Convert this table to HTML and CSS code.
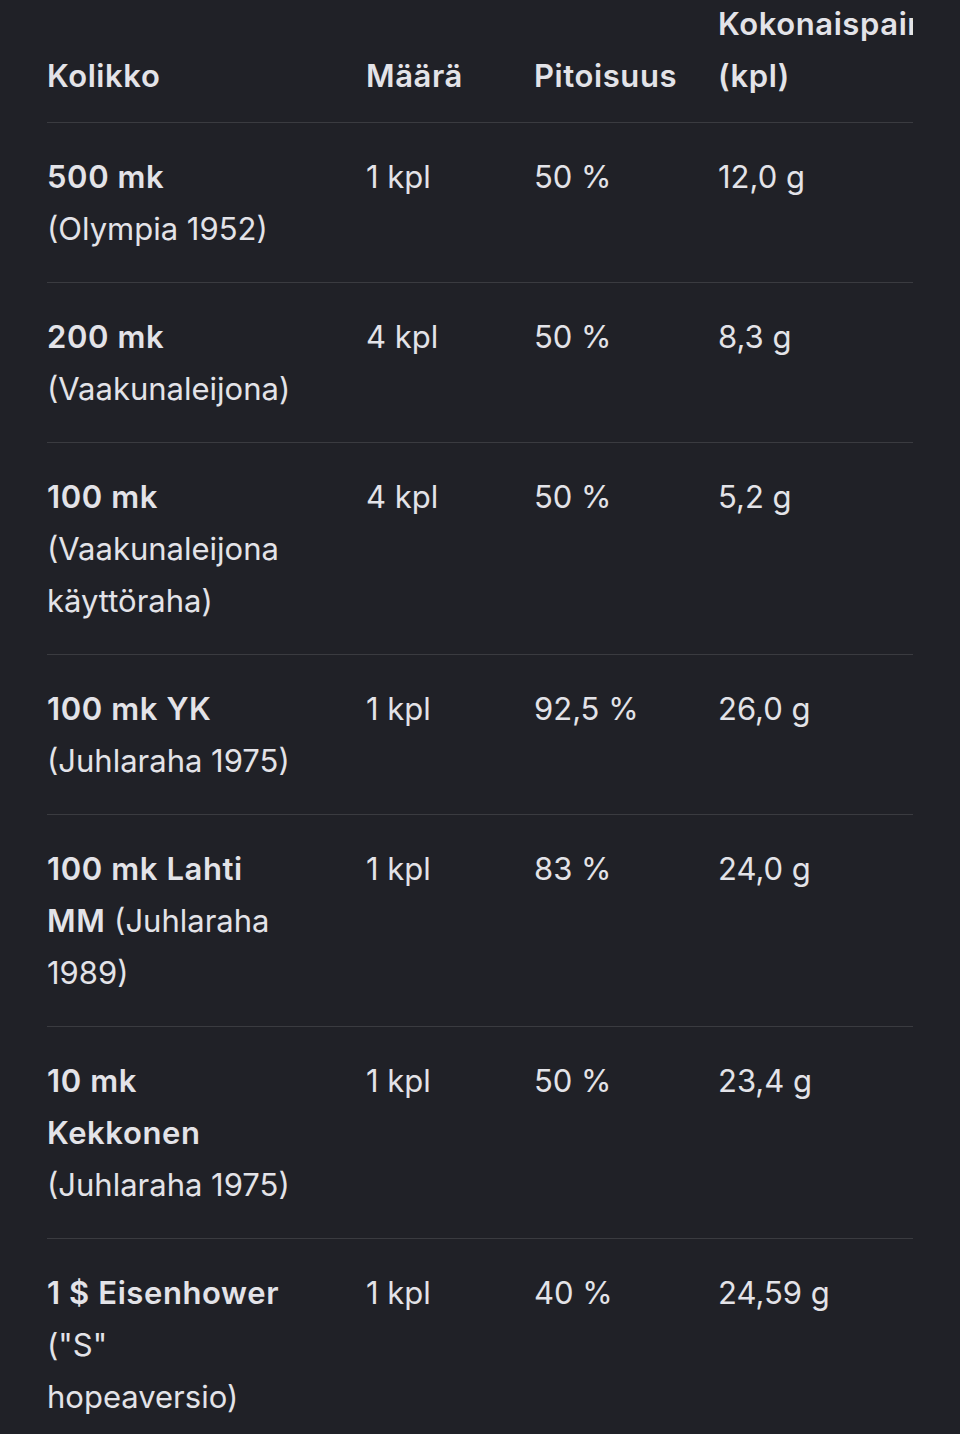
FILE: index.html
```html
<!DOCTYPE html>
<html lang="fi">
<head>
<meta charset="utf-8">
<title>Kolikot</title>
<link rel="stylesheet" href="styles.css">
</head>
<body>
<div class="table-wrap">
  <table class="coins">
    <colgroup>
      <col class="c1">
      <col class="c2">
      <col class="c3">
      <col class="c4">
    </colgroup>
    <thead>
      <tr>
        <th>Kolikko</th>
        <th>Määrä</th>
        <th>Pitoisuus</th>
        <th>Kokonaispaino (kpl)</th>
      </tr>
    </thead>
    <tbody>
      <tr>
        <td><b>500 mk</b> (Olympia 1952)</td>
        <td>1 kpl</td>
        <td>50 %</td>
        <td>12,0 g</td>
      </tr>
      <tr>
        <td><b>200 mk</b> (Vaakunaleijona)</td>
        <td>4 kpl</td>
        <td>50 %</td>
        <td>8,3 g</td>
      </tr>
      <tr>
        <td><b>100 mk</b> (Vaakunaleijona käyttöraha)</td>
        <td>4 kpl</td>
        <td>50 %</td>
        <td>5,2 g</td>
      </tr>
      <tr>
        <td><b>100 mk YK</b> (Juhlaraha 1975)</td>
        <td>1 kpl</td>
        <td>92,5 %</td>
        <td>26,0 g</td>
      </tr>
      <tr>
        <td><b>100 mk Lahti MM</b> (Juhlaraha 1989)</td>
        <td>1 kpl</td>
        <td>83 %</td>
        <td>24,0 g</td>
      </tr>
      <tr>
        <td><b>10 mk Kekkonen</b> (Juhlaraha 1975)</td>
        <td>1 kpl</td>
        <td>50 %</td>
        <td>23,4 g</td>
      </tr>
      <tr>
        <td><b>1 $ Eisenhower</b> ("S" hopeaversio)</td>
        <td>1 kpl</td>
        <td>40 %</td>
        <td>24,59 g</td>
      </tr>
    </tbody>
  </table>
</div>
</body>
</html>
```
FILE: styles.css
```css
html, body {
  margin: 0;
  padding: 0;
  background: #202127;
}

body {
  font-family: Inter, Roboto, "Liberation Sans", sans-serif;
  font-size: 31px;
  line-height: 52px;
  color: #e3e3e8;
  height: 1434px;
  overflow: hidden;
}

.table-wrap {
  margin-left: 47px;
  margin-top: -2px;
  width: 866px;
  overflow: hidden;
}

.coins {
  border-collapse: collapse;
  table-layout: fixed;
  width: 931px;
}

.c1 { width: 319px; }
.c2 { width: 168px; }
.c3 { width: 184px; }
.c4 { width: 260px; }

.coins th {
  font-weight: 600;
  letter-spacing: 0.6px;
  text-align: left;
  vertical-align: bottom;
  padding: 0 0 20px 0;
  border-bottom: 1px solid #3a3b40;
}

.coins th:first-child,
.coins td:first-child {
  padding-right: 73px;
}

.coins th:nth-child(n+2),
.coins td:nth-child(n+2) {
  padding-right: 16px;
}

.coins td {
  text-align: left;
  vertical-align: top;
  padding-top: 28px;
  padding-bottom: 27px;
  padding-left: 0;
  border-bottom: 1px solid #3a3b40;
}

.coins td b {
  font-weight: 600;
  letter-spacing: 0.6px;
}
```
